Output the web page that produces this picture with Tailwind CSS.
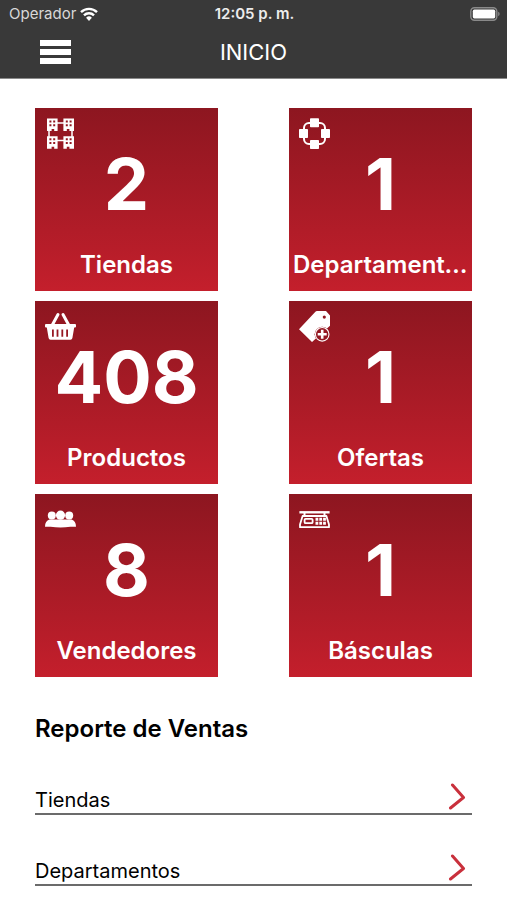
<!DOCTYPE html>
<html lang="es">
  <head>
    <meta charset="UTF-8" />
    <meta name="viewport" content="width=device-width, initial-scale=1.0" />
    <title>Inicio</title>
    <script src="https://cdn.jsdelivr.net/npm/@tailwindcss/browser@4"></script>
  </head>
  <body class="bg-white text-black font-['Inter','Liberation_Sans',sans-serif]">
    <header class="bg-[#393939] text-white border-b border-[#8a8a8a]">
      <!-- Status bar -->
      <div class="grid grid-cols-3 items-center h-7 pl-[9px] pr-[7px] text-[15px]">
        <div class="flex items-center gap-1 text-[#d8d8d8]">
          <span>Operador</span>
          <svg class="w-[18px] h-[14px]" viewBox="0 0 18 14" fill="none" stroke="#fff" stroke-width="2.4">
            <path d="M1 5.2a11.4 11.4 0 0 1 16 0" />
            <path d="M4 8.3a7 7 0 0 1 10 0" />
            <path d="M9 14l-2.9-3.2a4.1 4.1 0 0 1 5.8 0z" fill="#fff" stroke="none" />
          </svg>
        </div>
        <span class="text-center font-semibold whitespace-nowrap text-[#ececec]">12:05 p. m.</span>
        <svg class="justify-self-end w-[30px] h-[14px]" viewBox="0 0 30 14">
          <rect x="0.8" y="0.8" width="26" height="12.4" rx="3.6" fill="none" stroke="#8a8a8a" stroke-width="1.4" />
          <rect x="2.8" y="2.6" width="22.4" height="8.8" rx="1.6" fill="#fff" />
          <path d="M28.2 4.8v4.4a2.4 2.4 0 0 0 0-4.4z" fill="#8a8a8a" />
        </svg>
      </div>

      <!-- Nav bar -->
      <div class="grid grid-cols-[1fr_auto_1fr] items-center h-[50px] px-10 pb-0.5">
        <button type="button" aria-label="Menú" class="w-[31px] flex flex-col gap-[3px]">
          <span class="h-1.5 w-full bg-white"></span>
          <span class="h-1.5 w-full bg-white"></span>
          <span class="h-1.5 w-full bg-white"></span>
        </button>
        <h1 class="text-[22px] leading-8">INICIO</h1>
      </div>
    </header>

    <main class="px-[35px] pt-[29px]">
      <div class="grid grid-cols-2 gap-x-[71px] gap-y-2.5 text-white text-center">
        <a href="#" class="min-w-0 aspect-square bg-linear-to-b from-[#8d1620] to-[#c41f2c]">
          <div class="h-10 px-2.5 pt-2.5">
            <svg class="size-[31px]" viewBox="0 0 31 31" fill="#fff">
              <path d="M11 5h9M11 22.5h9M4 12v8M27 12v8" stroke="#fff" stroke-width="1.5" />
              <path fill-rule="evenodd" d="M2 .4h10.6v12.6H9.2v-2H6.6v2H2zM4.4 2.4v2h2v-2zM8.2 2.4v2h2v-2zM4.4 6.2v2h2v-2zM8.2 6.2v2h2v-2z" />
              <path fill-rule="evenodd" d="M18.4.4H29v12.6h-4.600v-2h-2.600v2h-3.400zM20.800 2.400v2h2v-2zM24.600 2.400v2h2v-2zM20.800 6.200v2h2v-2zM24.600 6.200v2h2v-2z" />
              <path fill-rule="evenodd" d="M2 18.200h10.600v12.600H9.200v-2H6.600v2H2zM4.400 20.200v2h2v-2zM8.200 20.200v2h2v-2zM4.400 24v2h2v-2zM8.200 24v2h2v-2z" />
              <path fill-rule="evenodd" d="M18.400 18.200H29v12.600h-4.600v-2h-2.600v2h-3.400zM20.800 20.200v2h2v-2zM24.600 20.200v2h2v-2zM20.800 24v2h2v-2zM24.600 24v2h2v-2z" />
            </svg>
          </div>
          <p class="text-7xl leading-none font-bold">2</p>
          <p class="mt-[29px] px-1 text-2xl font-semibold truncate">Tiendas</p>
        </a>

        <a href="#" class="min-w-0 aspect-square bg-linear-to-b from-[#8d1620] to-[#c41f2c]">
          <div class="h-10 px-2.5 pt-2.5">
            <svg class="size-[31px]" viewBox="0 0 31 31" fill="#fff">
              <rect x="5" y="5" width="21" height="21" rx="5" fill="none" stroke="#fff" stroke-width="2" />
              <rect x="11" y="0.2" width="9" height="9" rx="0.8" />
              <rect x="22" y="11" width="9" height="9" rx="0.8" />
              <rect x="11" y="22" width="9" height="9" rx="0.8" />
              <rect x="0" y="11" width="9" height="9" rx="0.8" />
            </svg>
          </div>
          <p class="text-7xl leading-none font-bold">1</p>
          <p class="mt-[29px] px-1 text-2xl font-semibold truncate">Departamentos</p>
        </a>

        <a href="#" class="min-w-0 aspect-square bg-linear-to-b from-[#8d1620] to-[#c41f2c]">
          <div class="h-10 px-2.5 pt-2.5">
            <svg class="size-[31px]" viewBox="0 0 31 31" fill="#fff">
              <path d="M7 14.5l6-11M24 14.5l-6-11" fill="none" stroke="#fff" stroke-width="3" stroke-linecap="round" />
              <path fill-rule="evenodd" d="M1 13h29a1 1 0 0 1 1 1v1.4a1 1 0 0 1-1 1h-.8L27.4 27a2 2 0 0 1-2 1.700H5.600a2 2 0 0 1-2-1.700L1.800 16.400H1a1 1 0 0 1-1-1V14a1 1 0 0 1 1-1zM7 18.400v7.400h1.800v-7.400zM11.600 18.400v7.400h1.800v-7.400zM16.400 18.400v7.400h1.800v-7.400zM21.200 18.400v7.400H23v-7.400z" />
            </svg>
          </div>
          <p class="text-7xl leading-none font-bold">408</p>
          <p class="mt-[29px] px-1 text-2xl font-semibold truncate">Productos</p>
        </a>

        <a href="#" class="min-w-0 aspect-square bg-linear-to-b from-[#8d1620] to-[#c41f2c]">
          <div class="h-10 px-2.5 pt-2.5">
            <svg class="size-[31px]" viewBox="0 0 31 31">
              <path fill="#fff" fill-rule="evenodd" d="M0 18.3L16.400.7Q17 0 18 0h9l4 4.400v10.400L13 31zM25.300 4.500a1.600 1.600 0 1 0 0 3.200 1.600 1.600 0 0 0 0-3.200z" />
              <circle cx="23.2" cy="23.3" r="7.6" fill="#951822" />
              <circle cx="23.2" cy="23.3" r="6.8" fill="none" stroke="#fff" stroke-width="1.1" />
              <path d="M23.2 18.8v9M18.7 23.3h9" stroke="#fff" stroke-width="2.6" />
            </svg>
          </div>
          <p class="text-7xl leading-none font-bold">1</p>
          <p class="mt-[29px] px-1 text-2xl font-semibold truncate">Ofertas</p>
        </a>

        <a href="#" class="min-w-0 aspect-square bg-linear-to-b from-[#8d1620] to-[#c41f2c]">
          <div class="h-10 px-2.5 pt-2.5">
            <svg class="size-[31px]" viewBox="0 0 31 31" fill="#fff">
              <circle cx="6.8" cy="11.4" r="4" />
              <circle cx="24.2" cy="11.4" r="4" />
              <circle cx="15.5" cy="11.2" r="4.6" />
              <path d="M0 22.8c0-4 1.600-6.200 4.400-7.200h22.200c2.800 1 4.400 3.200 4.400 7.200h-5.600q-9.900 1.600-19.800 0z" />
            </svg>
          </div>
          <p class="text-7xl leading-none font-bold">8</p>
          <p class="mt-[29px] px-1 text-2xl font-semibold truncate">Vendedores</p>
        </a>

        <a href="#" class="min-w-0 aspect-square bg-linear-to-b from-[#8d1620] to-[#c41f2c]">
          <div class="h-10 px-2.5 pt-2.5">
            <svg class="size-[31px]" viewBox="0 0 31 31" fill="none" stroke="#fff">
              <path d="M.4 8.300h30.200" stroke-width="2.400" />
              <path d="M5.500 9v3M25.500 9v3" stroke-width="2" />
              <path d="M3.600 12h23.800l2.600 8.500v2.700H1v-2.700z" stroke-width="1.800" stroke-linejoin="round" />
              <rect x="5.600" y="14.800" width="8" height="4.400" rx="1" stroke-width="1.800" />
              <path d="M16.500 15.200h10.400M16.500 19.200h10.400" stroke-width="3" stroke-dasharray="2.800 1" />
            </svg>
          </div>
          <p class="text-7xl leading-none font-bold">1</p>
          <p class="mt-[29px] px-1 text-2xl font-semibold truncate">Básculas</p>
        </a>
      </div>

      <section class="pt-9 pb-4">
        <h2 class="mb-[33px] text-2xl font-semibold">Reporte de Ventas</h2>
        <div class="flex flex-col gap-[34px]">
          <a href="#" class="h-[37px] flex items-end justify-between pr-1.5 pb-[3px] border-b-2 border-[#6b6b6b]">
            <span class="text-xl leading-5">Tiendas</span>
            <svg class="w-[18px] h-7" viewBox="0 0 18 28" fill="none" stroke="#c9303c" stroke-width="3" stroke-linecap="round" stroke-linejoin="round">
              <path d="M4.5 3l11 12.500L2.500 26" />
            </svg>
          </a>
          <a href="#" class="h-[37px] flex items-end justify-between pr-1.5 pb-[3px] border-b-2 border-[#6b6b6b]">
            <span class="text-xl leading-5">Departamentos</span>
            <svg class="w-[18px] h-7" viewBox="0 0 18 28" fill="none" stroke="#c9303c" stroke-width="3" stroke-linecap="round" stroke-linejoin="round">
              <path d="M4.5 3l11 12.500L2.500 26" />
            </svg>
          </a>
        </div>
      </section>
    </main>
  </body>
</html>
